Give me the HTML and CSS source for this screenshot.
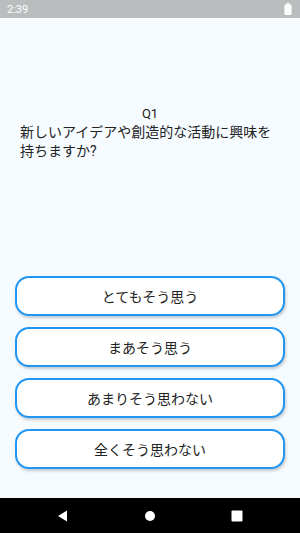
FILE: index.html
```html
<!DOCTYPE html>
<html lang="ja">
<head>
  <meta charset="UTF-8">
  <meta name="viewport" content="width=device-width, initial-scale=1.0">
  <title>Q1</title>
  <link rel="stylesheet" href="styles.css">
</head>
<body>

<div class="phone">
  <!-- Status Bar -->
  <div class="status-bar">
    <span class="time">2:39</span>
    <svg class="battery" width="8" height="12" viewBox="0 0 8 12">
      <rect x="2.5" y="0" width="3" height="1.5" fill="#fff"/>
      <rect x="0.5" y="1.5" width="7" height="10.5" rx="1" fill="#fff"/>
    </svg>
  </div>

  <!-- Question -->
  <div class="content">
    <div class="question">
      <p class="question-no">Q1</p>
      <p class="question-text">新しいアイデアや創造的な活動に興味を持ちますか?</p>
    </div>

    <div class="answers">
      <button class="answer">とてもそう思う</button>
      <button class="answer">まあそう思う</button>
      <button class="answer">あまりそう思わない</button>
      <button class="answer">全くそう思わない</button>
    </div>
  </div>

  <!-- Navigation Bar -->
  <div class="nav-bar">
    <svg width="12" height="12" viewBox="0 0 12 12"><path d="M10 0.5 L10 11.5 L1 6 Z" fill="#fff"/></svg>
    <svg width="12" height="12" viewBox="0 0 12 12"><circle cx="6" cy="6" r="5" fill="#fff"/></svg>
    <svg width="12" height="12" viewBox="0 0 12 12"><rect x="0.5" y="0.5" width="11" height="11" rx="1" fill="#fff"/></svg>
  </div>
</div>

</body>
</html>
```

FILE: styles.css
```css
* {
  box-sizing: border-box;
  margin: 0;
  padding: 0;
}
body {
  font-family: Roboto, "Noto Sans CJK JP", sans-serif;
  background-color: #f5fbff;
  color: #222;
}
.phone {
  width: 300px;
  height: 533px;
  display: flex;
  flex-direction: column;
}

/* Status Bar */
.status-bar {
  height: 18px;
  background-color: #babdbd;
  display: flex;
  align-items: center;
  justify-content: space-between;
  padding: 0 8px 0 7px;
}
.time {
  color: #fff;
  font-size: 11px;
}

/* Question */
.content {
  flex: 1;
  display: flex;
  flex-direction: column;
  justify-content: space-between;
  padding: 86px 0 29px;
}
.question {
  padding: 0 20px;
}
.question-no {
  text-align: center;
  font-size: 13px;
  line-height: 19px;
}
.question-text {
  font-size: 14px;
  line-height: 19px;
}

/* Answer Buttons */
.answers {
  display: flex;
  flex-direction: column;
  gap: 11px;
  padding: 0 15px;
}
.answer {
  height: 40px;
  background-color: #fff;
  border: 2px solid #2196f3;
  border-radius: 14px;
  box-shadow: 1px 2px 3px rgba(0, 0, 0, 0.2);
  font-family: Roboto, "Noto Sans CJK JP", sans-serif;
  font-size: 14px;
  color: #222;
  cursor: pointer;
}

/* Navigation Bar */
.nav-bar {
  height: 35px;
  background-color: #000;
  display: flex;
  align-items: center;
  justify-content: space-between;
  padding: 0 57px 0 57px;
}
```
